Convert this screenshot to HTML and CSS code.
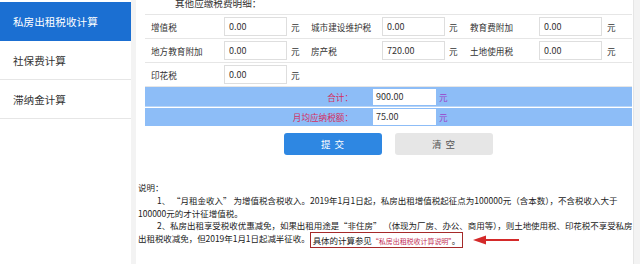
FILE: index.html
```html
<!DOCTYPE html>
<html lang="zh-CN">
<head>
    <meta charset="UTF-8">
    <title>私房出租税收计算</title>
    <link rel="stylesheet" href="styles.css">
</head>
<body>
<div class="page">
    <!-- 左侧菜单 -->
    <div class="side">
        <div class="side-item active">私房出租税收计算</div>
        <div class="side-item">社保费计算</div>
        <div class="side-item">滞纳金计算</div>
    </div>

    <div class="main">
        <div class="panel">
            <div class="caption">其他应缴税费明细：</div>

            <div class="row">
                <span class="label">增值税</span>
                <span class="cell"><span class="box">0.00</span></span>
                <span class="unit">元</span>
                <span class="label">城市建设维护税</span>
                <span class="cell"><span class="box">0.00</span></span>
                <span class="unit">元</span>
                <span class="label">教育费附加</span>
                <span class="cell"><span class="box">0.00</span></span>
                <span class="unit">元</span>
            </div>
            <div class="row">
                <span class="label">地方教育附加</span>
                <span class="cell"><span class="box">0.00</span></span>
                <span class="unit">元</span>
                <span class="label">房产税</span>
                <span class="cell"><span class="box">720.00</span></span>
                <span class="unit">元</span>
                <span class="label">土地使用税</span>
                <span class="cell"><span class="box">0.00</span></span>
                <span class="unit">元</span>
            </div>
            <div class="row">
                <span class="label">印花税</span>
                <span class="cell"><span class="box">0.00</span></span>
                <span class="unit">元</span>
            </div>

            <div class="sum-row first">
                <span class="sum-label">合计：</span>
                <span class="sum-box">900.00</span>
                <span class="sum-unit">元</span>
            </div>
            <div class="sum-row">
                <span class="sum-label">月均应纳税额：</span>
                <span class="sum-box">75.00</span>
                <span class="sum-unit">元</span>
            </div>

            <div class="actions">
                <button class="btn btn-primary">提 交</button>
                <button class="btn">清 空</button>
            </div>
        </div>

        <div class="notes">
            <div>说明：</div>
            <div class="para">1、 “月租金收入” 为增值税含税收入。2019年1月1日起，私房出租增值税起征点为100000元（含本数），不含税收入大于<br><span class="wrap">100000元的才计征增值税。</span></div>
            <div class="para tight">2、私房出租享受税收优惠减免，如果出租用途是“非住房” （体现为厂房、办公、商用等），则土地使用税、印花税不享受私房<br><span class="wrap">出租税收减免，但2019年1月1日起减半征收。<span class="ref">具体的计算参见<span class="link">“私房出租税收计算说明”</span>。</span><svg class="arrow" width="46" height="10" viewBox="0 0 46 10"><line x1="10" y1="5" x2="46" y2="5" stroke="#d42a2a" stroke-width="2"/><polygon points="0,5 13,0.5 13,9.5" fill="#d42a2a"/></svg></span></div>
        </div>
    </div>
</div>
</body>
</html>
```

FILE: styles.css
```css
body {
    margin: 0;
    background-color: #f3f3f3;
    font-family: "Noto Sans CJK SC", "Microsoft YaHei", sans-serif;
    color: #333;
    overflow: hidden;
}

.page {
    display: flex;
    height: 264px;
}

/* 左侧菜单 */
.side {
    width: 131px;
    padding-top: 2px;
    background-color: #fff;
    flex-shrink: 0;
}

.side-item {
    height: 38px;
    line-height: 40px;
    padding-left: 13px;
    font-size: 10.6px;
    color: #333;
    border-bottom: 1px solid #e6e6e6;
}

.side-item.active {
    background-color: #1b6fd2;
    color: #fff;
    border-bottom-color: #1b6fd2;
}

/* 主区域 */
.main {
    width: 497px;
    margin-left: 5px;
    background-color: #fff;
    border-right: 1px solid #e6e6e6;
}

.panel {
    margin-top: -6px;
    padding: 0 1px 0 9px;
}

.caption {
    height: 20px;
    line-height: 19px;
    padding-left: 30px;
    font-size: 9.6px;
    border-bottom: 1px solid #e6e6e6;
}

.row {
    display: grid;
    grid-template-columns: 78px 65px 17px 76px 65px 18px 74px 66px 1fr;
    align-items: center;
    height: 23px;
    border-bottom: 1px solid #e6e6e6;
    font-size: 8.6px;
}

.label {
    padding-left: 6px;
}

.cell {
    padding-left: 1px;
}

.box {
    display: block;
    width: 57px;
    height: 17px;
    line-height: 17px;
    padding-left: 4px;
    border: 1px solid #dedede;
    font-size: 9px;
}

.unit {
    padding-left: 3px;
}

/* 合计 */
.sum-row {
    display: grid;
    grid-template-columns: 228px 63px 1fr;
    align-items: center;
    height: 18px;
    margin-top: 1px;
    background-color: #8dbdf7;
    font-size: 8.6px;
}

.sum-row.first {
    height: 19px;
    margin-top: 0;
    border-bottom: 1px solid #b9d5f6;
}

.sum-label {
    text-align: right;
    padding-right: 20px;
    color: #d42f62;
}

.sum-box {
    height: 16px;
    line-height: 16px;
    padding-left: 3px;
    background-color: #fff;
    font-size: 9px;
    color: #333;
}

.sum-unit {
    padding-left: 3px;
    color: #9b3fc8;
}

.actions {
    display: flex;
    justify-content: center;
    gap: 13px;
    margin-top: 7px;
}

.btn {
    width: 98px;
    height: 22px;
    border: none;
    border-radius: 3px;
    background-color: #e6e6e6;
    color: #555;
    font-family: inherit;
    font-size: 9.5px;
    letter-spacing: 1px;
}

.btn-primary {
    background-color: #2e87e2;
    color: #fff;
}

/* 说明 */
.notes {
    margin-top: 26px;
    padding-left: 2px;
    font-size: 8.5px;
    line-height: 12.8px;
    color: #222;
    white-space: nowrap;
    overflow: hidden;
}

.para {
    text-indent: 19px;
}

.para.tight {
    letter-spacing: -0.05px;
}

.wrap {
    display: inline-block;
    text-indent: 0;
}

.ref {
    display: inline-block;
    height: 14px;
    line-height: 14px;
    padding: 0 2px;
    border: 1px solid #a52a2a;
    vertical-align: middle;
}

.link {
    font-size: 7px;
    color: #c33058;
}

.arrow {
    margin-left: 10px;
    vertical-align: middle;
}
```
